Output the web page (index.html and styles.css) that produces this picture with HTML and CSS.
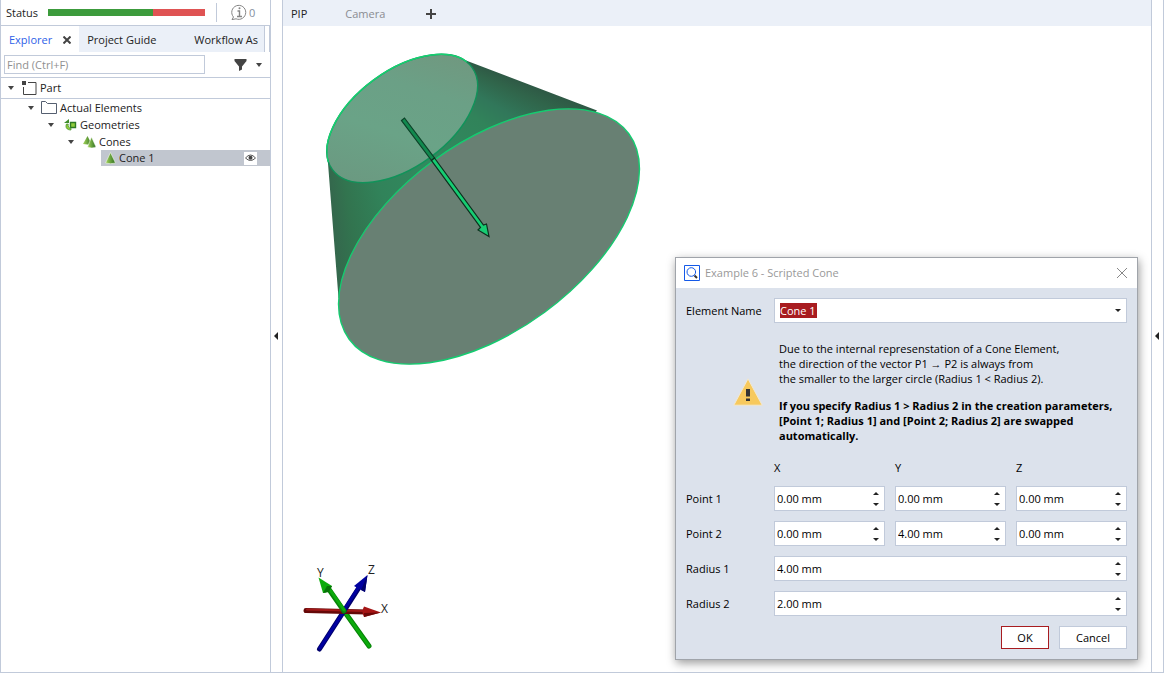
FILE: index.html
```html
<!DOCTYPE html>
<html lang="en">
<head>
<meta charset="utf-8">
<title>Example 6 - Scripted Cone</title>
<link rel="stylesheet" href="styles.css">
</head>
<body>
<svg class="defs" width="0" height="0" aria-hidden="true">
  <defs>
    <clipPath id="mantle"><path d="M466 60.500L597 110.500 489 236 338.500 298 327.500 157 402 118z"/></clipPath>
    <clipPath id="outer-rim"><path d="M327 163L467 62 460 40 320 40z"/></clipPath>
    <linearGradient id="cap" gradientUnits="userSpaceOnUse" x1="335" y1="168" x2="470" y2="70">
      <stop offset="0" stop-color="#6b9880"/>
      <stop offset=".4" stop-color="#6aa387"/>
      <stop offset=".7" stop-color="#6ba086"/>
      <stop offset="1" stop-color="#71977f"/>
    </linearGradient>
    <linearGradient id="leaf" x1="0" x2="1" y1="0" y2="0">
      <stop offset="0" stop-color="#a6d65c"/>
      <stop offset="1" stop-color="#2c6e20"/>
    </linearGradient>
    <symbol id="caret" viewBox="0 0 6 4"><path d="M0 0h6L3 4z" fill="#444"/></symbol>
    <symbol id="up" viewBox="0 0 6 3"><path d="M0 3h6L3 0z" fill="#222"/></symbol>
    <symbol id="down" viewBox="0 0 6 3"><path d="M0 0h6L3 3z" fill="#222"/></symbol>
    <symbol id="back" viewBox="0 0 4 8"><path d="M4 0v8L0 4z" fill="#222"/></symbol>
  </defs>
</svg>

<div class="app">
  <aside class="explorer">
    <div class="status">
      <span class="status-label">Status</span>
      <div class="meter"><i class="meter-ok"></i><i class="meter-bad"></i></div>
      <span class="rule"></span>
      <svg class="info" width="17" height="17" viewBox="0 0 17 17" fill="none" stroke="#858585"><path d="M2.500 13A7 7 0 1 1 5 14.800L1 15.600z"/><path d="M6.500 7H8.500V12.500M6 12.500h5" stroke-width="1.400"/><circle cx="8.500" cy="4.200" r="1" fill="#858585" stroke="none"/></svg>
      <span class="count">0</span>
    </div>
    <nav class="tabs">
      <button class="tab tab-active">Explorer<svg width="8" height="8" viewBox="0 0 8 8" stroke="#444" stroke-width="2"><path d="M.5.5l7 7M7.500.5l-7 7"/></svg></button>
      <button class="tab">Project Guide</button>
      <button class="tab tab-last">Workflow As</button>
      <span class="tab-scroll"></span>
    </nav>
    <div class="find">
      <input type="text" placeholder="Find (Ctrl+F)" aria-label="Find">
      <button class="filter" aria-label="Filter"><svg width="13" height="12" viewBox="0 0 13 12" fill="#444"><path d="M.5 0h12v2L8 7.500v3L5 12V7.500L.5 2z"/></svg><svg class="caret" width="6" height="4"><use href="#caret"/></svg></button>
    </div>
    <ul class="tree">
      <li class="node node-root"><svg class="caret" width="6" height="4"><use href="#caret"/></svg><svg width="15" height="15" viewBox="0 0 15 15" fill="none" stroke="#444"><path d="M6 1.500h8v12H1.500V6"/><path d="M0 0h4v4H0z" fill="#444" stroke="none"/></svg><span>Part</span></li>
      <li class="node level-1"><svg class="caret" width="6" height="4"><use href="#caret"/></svg><svg width="17" height="13" viewBox="0 0 17 13" fill="#fff" stroke="#555f70"><path d="M.5 12.500V.5h4l2 2h9v10z"/></svg><span>Actual Elements</span></li>
      <li class="node level-2"><svg class="caret" width="6" height="4"><use href="#caret"/></svg><svg width="13" height="12" viewBox="0 0 13 12"><path d="M0 4L5 0v4z" fill="#3f8d2c"/><path d="M6.500 3.500h5v5h-5z" fill="#92cc3c" stroke="#2f7a25" stroke-width="1.400"/><path d="M2.500 5C1 8 2.500 11 7 11V9.200C4.500 9 4 7.500 4.200 5z" fill="#92cc3c" stroke="#3f8d2c" stroke-width=".7"/></svg><span>Geometries</span></li>
      <li class="node level-3"><svg class="caret" width="6" height="4"><use href="#caret"/></svg><svg width="13" height="12" viewBox="0 0 13 12"><path d="M4.500 0L9 9 0 8z" fill="url(#leaf)"/><path d="M8.500 1L13 11Q9 13 4.500 11z" fill="url(#leaf)" stroke="#fff" stroke-width=".5"/></svg><span>Cones</span></li>
      <li class="node level-4"><svg width="11" height="12" viewBox="0 0 11 12"><path d="M5.500.5L10.500 11Q5.500 12.500.5 11z" fill="url(#leaf)" stroke="#e6f0dc" stroke-width=".7"/></svg><span>Cone 1</span><button class="eye" aria-label="Toggle visibility"><svg width="11" height="8" viewBox="0 0 11 8"><path d="M.5 4Q5.500-2 10.500 4 5.500 9 .5 4z" fill="none" stroke="#555"/><circle cx="5.500" cy="3.800" r="2" fill="#444"/></svg></button></li>
    </ul>
  </aside>

  <button class="gutter" aria-label="Collapse explorer"><svg width="4" height="8"><use href="#back"/></svg></button>

  <main class="view">
    <nav class="view-tabs">
      <button class="view-tab view-tab-active">PIP</button>
      <button class="view-tab">Camera</button>
      <button class="view-tab" aria-label="Add view"><svg width="10" height="10" viewBox="0 0 10 10" stroke="#444" stroke-width="2"><path d="M5 0v10M0 5h10"/></svg></button>
    </nav>
    <div class="scene">
      <svg class="cone" width="328" height="328" viewBox="320 46 328 328">
        <g clip-path="url(#mantle)"><foreignObject x="316" y="2" width="300" height="310"><div class="mantle"></div></foreignObject></g>
        <ellipse cx="402.200" cy="118.500" rx="86.500" ry="48" transform="rotate(-36.300 402.200 118.500)" fill="url(#cap)" stroke="#11935a" stroke-width="1.400"/>
        <g clip-path="url(#outer-rim)"><ellipse cx="402.200" cy="118.500" rx="86.500" ry="48" transform="rotate(-36.300 402.200 118.500)" fill="none" stroke="#15d070" stroke-width="1.400"/></g>
        <ellipse cx="489" cy="236.500" rx="173.500" ry="94" transform="rotate(-36.300 489 236.500)" fill="#688073" stroke="#15cb70" stroke-width="1.400"/>
        <path d="M401.500 120.500L404.500 118 434.500 158 431.500 160.500z" fill="#11894e" stroke="#0b4228" stroke-width="1.200"/>
        <path d="M431.500 160.500L434.500 158 483.500 225 486.500 224 489 236.500 478 230 480.500 227.500z" fill="#16cc72" stroke="#0c2e1d" stroke-width="1.200"/>
      </svg>
      <svg class="triad" width="92" height="92" viewBox="300 562 92 92" stroke-linecap="round">
        <path d="M344 611L369 646" stroke="#078407" stroke-width="5"/><path d="M344 611L369 646" stroke="#0cab0c" stroke-width="3"/>
        <path d="M344 611L319.500 649" stroke="#00006c" stroke-width="5"/><path d="M344 611L320 648" stroke="#0000a0" stroke-width="3"/>
        <path d="M306 610.500L366 612" stroke="#650808" stroke-width="5"/><path d="M307 609.500L365 611" stroke="#a11818" stroke-width="2"/>
        <path d="M364 606.500L381 612.500 364 617Q361 612 364 606.500z" fill="#a51515"/><path d="M364 613L381 612.500 364 617z" fill="#6c0808"/>
        <path d="M344 611L360 586" stroke="#00006c" stroke-width="5"/><path d="M344 610L360 585" stroke="#0000a0" stroke-width="3"/>
        <path d="M367.500 575L365 592 354 586z" fill="#0000a0"/><path d="M367.500 575L365 592 361 590z" fill="#00006c"/>
        <path d="M344 611L328 588" stroke="#078407" stroke-width="5"/><path d="M344 610L328 587" stroke="#0cab0c" stroke-width="3"/>
        <path d="M318.500 577.500L332 586Q329 593 323 593z" fill="#0cab0c"/><path d="M332 586L329 592 323 593 327 586z" fill="#077407"/>
        <text x="317" y="577">Y</text><text x="368" y="574">Z</text><text x="381" y="613">X</text>
      </svg>
    </div>
  </main>

  <button class="gutter gutter-right" aria-label="Expand panel"><svg width="4" height="8"><use href="#back"/></svg></button>
</div>

<form class="dialog" role="dialog" aria-labelledby="dialog-title">
  <header class="dialog-head">
    <svg width="16" height="16" viewBox="0 0 16 16" fill="none" stroke="#1459e8"><path d="M.5.5h15v15H.5z"/><circle cx="7.300" cy="7" r="4.300"/><path d="M10.500 10.500l2.500 2.500" stroke="#333" stroke-width="2"/></svg>
    <span class="dialog-title" id="dialog-title">Example 6 - Scripted Cone</span>
    <button type="button" class="close" aria-label="Close"><svg width="12" height="12" viewBox="0 0 12 12" stroke="#888"><path d="M1 1l10 10M11 1L1 11"/></svg></button>
  </header>
  <div class="dialog-body">
    <label for="name">Element Name</label>
    <div class="field wide combo"><input id="name" class="selected" type="text" value="Cone 1"><button type="button" aria-label="Choose name"><svg width="6" height="3"><use href="#down"/></svg></button></div>

    <svg class="warning" width="30" height="28" viewBox="0 0 30 28"><path d="M15 .8L29.200 27.200H.8z" fill="#f7c95d" stroke="#f2e8d0"/><path d="M13 11h4v7.500h-4zM13 20.500h4v2.500h-4z" fill="#333"/></svg>
    <div class="note">
      <p>Due to the internal represenstation of a Cone Element,<br>the direction of the vector P1 → P2 is always from<br>the smaller to the larger circle (Radius 1 &lt; Radius 2).</p>
      <p class="strong">If you specify Radius 1 &gt; Radius 2 in the creation parameters,<br>[Point 1; Radius 1] and [Point 2; Radius 2] are swapped<br>automatically.</p>
    </div>

    <span class="axis axis-x">X</span><span class="axis">Y</span><span class="axis">Z</span>

    <label for="p1x">Point 1</label>
    <div class="field"><input id="p1x" value="0.00 mm"><span class="spin"><button type="button" aria-label="Increase"><svg width="6" height="3"><use href="#up"/></svg></button><button type="button" aria-label="Decrease"><svg width="6" height="3"><use href="#down"/></svg></button></span></div>
    <div class="field"><input aria-label="Point 1 Y" value="0.00 mm"><span class="spin"><button type="button" aria-label="Increase"><svg width="6" height="3"><use href="#up"/></svg></button><button type="button" aria-label="Decrease"><svg width="6" height="3"><use href="#down"/></svg></button></span></div>
    <div class="field"><input aria-label="Point 1 Z" value="0.00 mm"><span class="spin"><button type="button" aria-label="Increase"><svg width="6" height="3"><use href="#up"/></svg></button><button type="button" aria-label="Decrease"><svg width="6" height="3"><use href="#down"/></svg></button></span></div>

    <label for="p2x">Point 2</label>
    <div class="field"><input id="p2x" value="0.00 mm"><span class="spin"><button type="button" aria-label="Increase"><svg width="6" height="3"><use href="#up"/></svg></button><button type="button" aria-label="Decrease"><svg width="6" height="3"><use href="#down"/></svg></button></span></div>
    <div class="field"><input aria-label="Point 2 Y" value="4.00 mm"><span class="spin"><button type="button" aria-label="Increase"><svg width="6" height="3"><use href="#up"/></svg></button><button type="button" aria-label="Decrease"><svg width="6" height="3"><use href="#down"/></svg></button></span></div>
    <div class="field"><input aria-label="Point 2 Z" value="0.00 mm"><span class="spin"><button type="button" aria-label="Increase"><svg width="6" height="3"><use href="#up"/></svg></button><button type="button" aria-label="Decrease"><svg width="6" height="3"><use href="#down"/></svg></button></span></div>

    <label for="r1">Radius 1</label>
    <div class="field wide"><input id="r1" value="4.00 mm"><span class="spin"><button type="button" aria-label="Increase"><svg width="6" height="3"><use href="#up"/></svg></button><button type="button" aria-label="Decrease"><svg width="6" height="3"><use href="#down"/></svg></button></span></div>

    <label for="r2">Radius 2</label>
    <div class="field wide"><input id="r2" value="2.00 mm"><span class="spin"><button type="button" aria-label="Increase"><svg width="6" height="3"><use href="#up"/></svg></button><button type="button" aria-label="Decrease"><svg width="6" height="3"><use href="#down"/></svg></button></span></div>

    <div class="actions"><button type="button" class="btn btn-ok">OK</button><button type="button" class="btn btn-cancel">Cancel</button></div>
  </div>
</form>
</body>
</html>
```
FILE: styles.css
```css
* { box-sizing: border-box; }
body { margin: 0; background: #fff; color: #222; font: 11px/16px "Open Sans", "Noto Sans", sans-serif; }
button, input { margin: 0; padding: 0; border: 0; background: none; color: inherit; font: inherit; }
svg { display: block; flex: none; }
.defs { position: absolute; }

.app { display: flex; height: 100vh; border-bottom: 1px solid #c1cada; }

.explorer { flex: none; width: 271px; border: solid #c1cada; border-width: 0 1px; overflow: hidden; }
.status { display: flex; align-items: center; height: 26px; padding-left: 5px; border-bottom: 1px solid #c1cada; }
.status-label { width: 42px; }
.meter { display: flex; width: 157px; height: 7px; margin-right: 11px; }
.meter-ok { flex: 2; background: #3c9b3c; }
.meter-bad { flex: 1; background: #df5353; }
.rule { width: 1px; height: 19px; background: #c1cada; }
.info { margin: 0 1px 0 14px; }
.count { color: #8590a0; }

.tabs { position: relative; display: flex; height: 26px; background: #ebf0f8; }
.tab { display: flex; align-items: center; gap: 11px; padding: 2px 8px 0; white-space: nowrap; }
.tab-active { background: #fff; color: #2f5fe8; }
.tab-last { padding-left: 30px; }
.tab-scroll { position: absolute; top: 0; right: 0; bottom: 0; width: 12px; border-left: 6px solid #ebf0f880; background: #fff; background-clip: padding-box; box-shadow: inset 1px 0 #c1cada, inset -1px 0 #c1cada; }

.find { display: flex; align-items: center; height: 26px; padding: 0 8px 0 3px; border-bottom: 1px solid #c1cada; }
.find input { width: 201px; height: 19px; padding: 0 2px; border: 1px solid #c1cada; background: #fff; }
.find input::placeholder { color: #909090; opacity: 1; }
.filter { display: flex; align-items: center; gap: 9px; margin-left: auto; }

.tree { margin: 0; padding: 0; list-style: none; }
.node { display: flex; align-items: center; gap: 3px; height: 17px; }
.node .caret { margin-right: 4px; }
.node-root { height: 21px; padding-left: 7px; border-bottom: 1px solid #c1cada; }
.node-root .caret { margin-right: 5px; }
.level-1 { padding-left: 27px; gap: 2px; }
.level-1 .caret { margin-right: 5px; }
.level-2 { padding-left: 47px; }
.level-2 .caret { margin-right: 7px; }
.level-3 { padding-left: 67px; }
.level-3 .caret { margin-right: 6px; }
.level-4 { height: 16px; margin-left: 100px; padding-left: 4px; background: #c1c6cf; }
.eye { display: grid; place-items: center; width: 13px; height: 13px; margin: 0 13px 0 auto; background: #fff; }

.gutter { flex: none; display: grid; place-items: center; width: 11px; padding-right: 1px; }
.gutter-right { width: 12px; border-right: 1px solid #c1cada; }

.view { flex: 1; display: flex; flex-direction: column; border: solid #c1cada; border-width: 0 1px; min-width: 0; }
.view-tabs { display: flex; height: 26px; padding: 2px 0 0 8px; gap: 38px; background: #ebf0f8; }
.view-tab { display: flex; align-items: center; color: #8a8c92; }
.view-tab-active { color: #222; }
.view-tab:last-child { margin-left: 3px; }
.scene { flex: 1; display: flex; flex-direction: column; justify-content: space-between; min-height: 0; padding: 20px 17px 18px; }
.cone { margin-left: 20px; }
.mantle { height: 310px; background: conic-gradient(at 0 0, #2e5443 110deg, #30644a 114deg, #31775a 120deg, #31835a 126deg, #318a5f 145deg, #31835a 161deg, #32744f 171deg, #35644c 177deg); }
.triad text { font: 12px "Open Sans", sans-serif; fill: #222; }

.dialog { position: absolute; top: 257px; right: 26px; width: 463px; border: 1px solid #a0a4aa; background: #dce2ec; color: #000; box-shadow: 1px 3px 9px #0006; }
.dialog-head { display: flex; align-items: center; height: 30px; padding: 0 9px 0 8px; gap: 5px; background: #fff; color: #999; }
.close { margin-left: auto; }
.dialog-body { display: grid; grid-template-columns: 78px repeat(3, minmax(0, 1fr)); gap: 10px; align-items: center; padding: 10px; }
.dialog-body label { white-space: nowrap; }
.wide { grid-column: span 3; }
.field { display: flex; align-items: center; height: 25px; padding: 0 5px 0 2px; border: 1px solid #c1cada; background: #fff; }
.field input { flex: 1; min-width: 0; }
.combo { justify-content: space-between; padding-left: 5px; }
.combo .selected { flex: none; width: 37px; height: 15px; background: #a81c20; color: #fff; field-sizing: content; }
.spin { display: grid; gap: 8px; }
.warning { justify-self: end; margin-right: 1px; }
.note { grid-column: span 3; padding: 8px 0 7px 5px; line-height: 15px; white-space: nowrap; }
.note p { margin: 0 0 12px; }
.note .strong { margin: 0; font-weight: 700; }
.axis-x { grid-column: 2; }
.actions { grid-column: 1 / -1; display: flex; justify-content: flex-end; gap: 10px; }
.btn { height: 23px; border: 1px solid #c1cada; background: #fff; }
.btn-ok { width: 48px; border-color: #a81c20; }
.btn-cancel { width: 68px; }
```
